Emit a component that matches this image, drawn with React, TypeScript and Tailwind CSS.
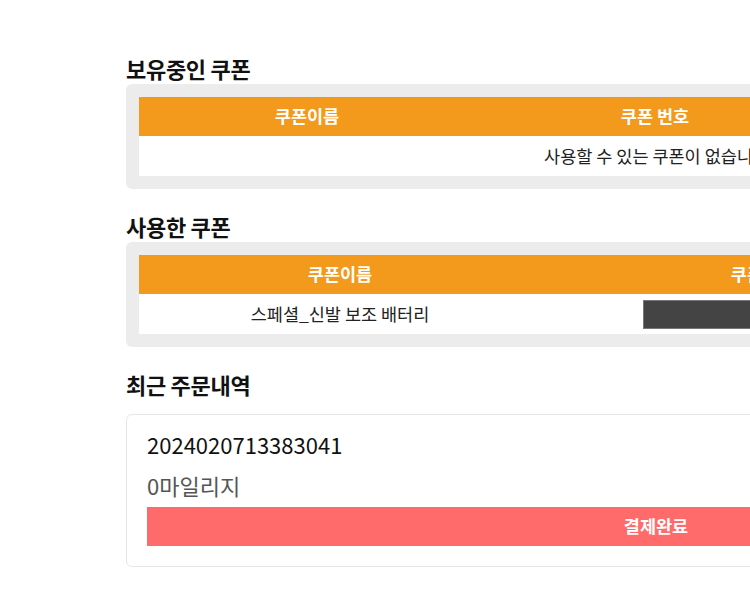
import React from 'react'

const font = { fontFamily: '"Noto Sans CJK KR", "Noto Sans", sans-serif' }

function SectionTitle({ children }: { children: React.ReactNode }) {
  return <h2 className="h-[28px] text-[22px] leading-[24px] font-bold text-[#111] tracking-[-0.3px]">{children}</h2>
}

export default function App() {
  return (
    <div className="w-full min-h-[600px] overflow-hidden bg-white" style={font}>
      <div className="w-[1090px] pl-[126px] pt-[56px] pb-[33px]">

        {/* 보유중인 쿠폰 */}
        <SectionTitle>보유중인 쿠폰</SectionTitle>
        <div className="w-[1066px] rounded-[6px] bg-[#ececec] p-[13px]">
          <table className="w-full table-fixed border-collapse">
            <colgroup>
              <col className="w-[336px]" />
              <col className="w-[360px]" />
              <col />
            </colgroup>
            <thead>
              <tr className="h-[39px] bg-[#f3991b] text-white text-[17.5px]">
                <th className="font-bold">쿠폰이름</th>
                <th className="font-bold">쿠폰 번호</th>
                <th className="font-bold">유효기간</th>
              </tr>
            </thead>
            <tbody>
              <tr className="h-[40px] bg-white">
                <td colSpan={3} className="text-center text-[17.5px] text-[#222]">사용할 수 있는 쿠폰이 없습니다.</td>
              </tr>
            </tbody>
          </table>
        </div>

        {/* 사용한 쿠폰 */}
        <div className="mt-[25px]">
          <SectionTitle>사용한 쿠폰</SectionTitle>
        </div>
        <div className="w-[1042px] rounded-[6px] bg-[#ececec] p-[13px]">
          <table className="w-full table-fixed border-collapse">
            <colgroup>
              <col className="w-[402px]" />
              <col className="w-[448px]" />
              <col />
            </colgroup>
            <thead>
              <tr className="h-[39px] bg-[#f3991b] text-white text-[17.5px]">
                <th className="font-bold">쿠폰이름</th>
                <th className="font-bold">쿠폰 번호</th>
                <th className="font-bold">사용일</th>
              </tr>
            </thead>
            <tbody>
              <tr className="h-[40px] bg-white text-[17.5px] text-[#222]">
                <td className="text-center">스페셜_신발 보조 배터리</td>
                <td>
                  <div className="mx-auto w-[244px] h-[29px] bg-[#444] border border-[#777]" />
                </td>
                <td className="text-center">2024-02-07</td>
              </tr>
            </tbody>
          </table>
        </div>

        {/* 최근 주문내역 */}
        <div className="mt-[25px] mb-[14px]">
          <SectionTitle>최근 주문내역</SectionTitle>
        </div>
        <div className="w-[1060px] rounded-[6px] border border-[#e6e6e6] px-[20px] pt-[15px] pb-[20px]">
          <p className="text-[22px] leading-[28px] text-[#111]">2024020713383041</p>
          <p className="mt-[13px] text-[22px] leading-[28px] text-[#555]">0마일리지</p>
          <div className="mt-[8px] h-[39px] bg-[#ff6b6b] flex items-center justify-center text-white text-[17.5px] font-bold">
            결제완료
          </div>
        </div>
      </div>
    </div>
  )
}
